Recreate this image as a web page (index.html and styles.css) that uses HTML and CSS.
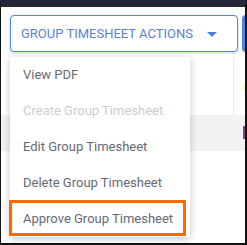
FILE: index.html
```html
<!DOCTYPE html>
<html lang="en">
<head>
  <meta charset="UTF-8">
  <title>Group Timesheet Actions</title>
  <link rel="stylesheet" href="styles.css">
</head>
<body>
  <div class="frame">
    <div class="toolbar">
      <button class="actions-button">
        <span>GROUP TIMESHEET ACTIONS</span>
        <svg class="caret" width="10" height="5" viewBox="0 0 10 5"><path d="M0 0h10L5 5z" fill="#4a7fd8"/></svg>
      </button>
      <div class="next-button"></div>
    </div>

    <div class="grid">
      <div class="grid-head">
        <div class="cell"></div>
        <div class="cell cell-edge">s</div>
      </div>
      <div class="grid-row shaded">
        <div class="cell"></div>
        <div class="cell cell-edge"><span class="mark"></span></div>
      </div>
      <div class="grid-row">
        <div class="cell"></div>
        <div class="cell"></div>
      </div>
    </div>

    <ul class="menu">
      <li class="menu-item">View PDF</li>
      <li class="menu-item disabled">Create Group Timesheet</li>
      <li class="menu-item">Edit Group Timesheet</li>
      <li class="menu-item">Delete Group Timesheet</li>
      <li class="menu-item highlighted">Approve Group Timesheet</li>
    </ul>
  </div>
</body>
</html>
```

FILE: styles.css
```css
:root {
  --blue: #4a86e0;
  --blue-text: #5a82d8;
  --text: #656a75;
  --muted: #cbccce;
  --line: #ececec;
  --shade: #f2f2f2;
  --accent: #ff6a00;
}

body {
  margin: 0;
  font-family: Roboto, 'Liberation Sans', sans-serif;
  background: #fff;
}

.frame {
  position: relative;
  width: 247px;
  height: 245px;
  box-sizing: border-box;
  border-top: 7px solid #232939;
  border-left: 1px solid #111;
  border-right: 2px solid #111;
  border-bottom: 2px solid #111;
  overflow: hidden;
  background: #fff;
}

.toolbar {
  display: flex;
  gap: 4px;
  padding: 8px 0 0 9px;
  height: 42px;
  box-sizing: border-box;
}

.actions-button {
  display: flex;
  align-items: center;
  justify-content: space-between;
  width: 228px;
  height: 37px;
  flex-shrink: 0;
  padding: 0 20px 0 10px;
  box-sizing: border-box;
  background: #fff;
  border: 1px solid var(--blue);
  border-radius: 4px;
  box-shadow: 0 1px 3px rgba(0, 0, 0, 0.18);
  font-family: inherit;
  font-size: 13px;
  color: var(--blue-text);
  cursor: pointer;
}

.caret {
  margin-top: 1px;
}

.next-button {
  width: 20px;
  height: 37px;
  flex-shrink: 0;
  background: var(--blue);
  border-radius: 4px;
}

.grid {
  margin-top: 8px;
}

.grid-head,
.grid-row {
  display: flex;
}

.grid-head {
  height: 58px;
}

.grid-row {
  height: 36px;
}

.grid-row.shaded {
  background: var(--shade);
}

.cell {
  flex: 0 0 232px;
  font-size: 13px;
  color: #333;
}

.cell-edge {
  flex: 1;
  padding: 21px 0 0 10px;
  border-left: 1px solid var(--line);
}

.grid-row .cell-edge {
  padding: 11px 0 0 10px;
  border-left: none;
}

.mark {
  display: block;
  width: 2px;
  height: 13px;
  background: #8a3f80;
}

.menu {
  position: absolute;
  left: 9px;
  top: 50px;
  width: 180px;
  margin: 0;
  padding: 0;
  list-style: none;
  background: #fff;
  box-shadow: 0 2px 8px rgba(0, 0, 0, 0.22);
}

.menu-item {
  position: relative;
  height: 36px;
  line-height: 36px;
  padding-left: 13px;
  font-size: 13px;
  color: var(--text);
  cursor: pointer;
}

.menu-item.disabled {
  color: var(--muted);
  cursor: default;
}

.menu-item.highlighted::after {
  content: "";
  position: absolute;
  left: -1px;
  top: -1px;
  width: 177px;
  height: 36px;
  box-sizing: border-box;
  border: 3px solid var(--accent);
}
```
